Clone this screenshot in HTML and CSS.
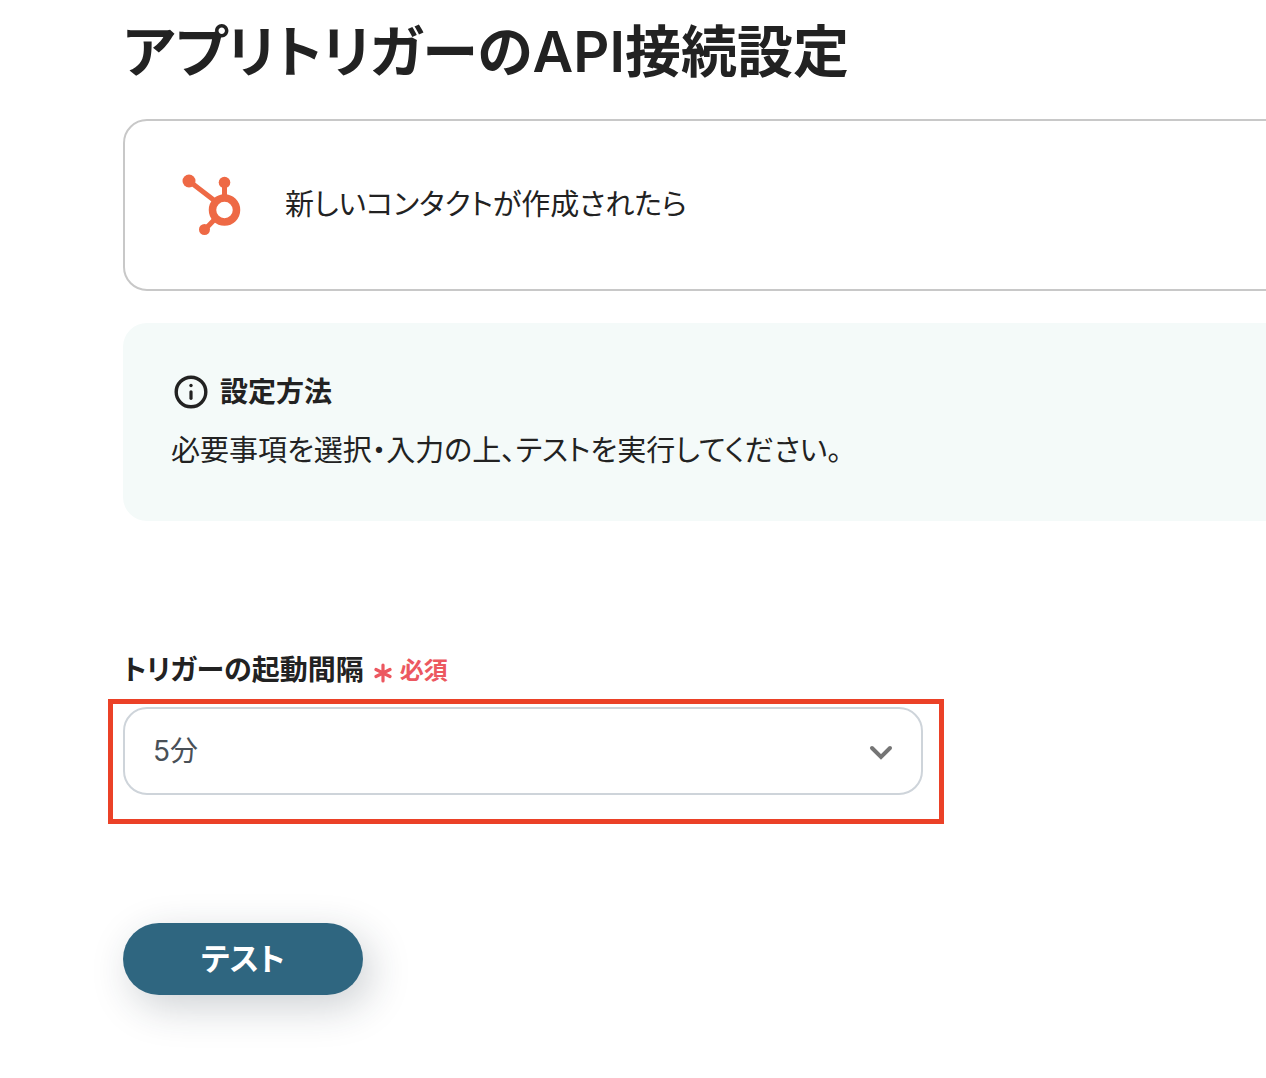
FILE: index.html
```html
<!DOCTYPE html>
<html lang="ja">
<head>
<meta charset="utf-8">
<title>アプリトリガーのAPI接続設定</title>
<link rel="stylesheet" href="styles.css">
</head>
<body>
<main class="page">
  <h1 class="title">アプリトリガーのAPI接続設定</h1>
  <section class="trigger">
    <svg class="trigger-logo" viewBox="0 0 60 62" aria-hidden="true">
      <g fill="none" stroke="#ee6945">
        <path d="M7 7 33 27M42.500 9V24M22.500 56 33 45" stroke-width="5"/>
        <circle cx="42.500" cy="36" r="12" stroke-width="7.5"/>
      </g>
      <g fill="#ee6945"><circle cx="7" cy="7" r="6.500"/><circle cx="42.500" cy="8.500" r="5.800"/><circle cx="22.500" cy="55.500" r="5.500"/></g>
    </svg>
    <p class="trigger-name">新しいコンタクトが作成されたら</p>
  </section>
  <section class="guide">
    <h2 class="guide-title">
      <svg class="guide-icon" viewBox="0 0 34 34" aria-hidden="true">
        <circle cx="17" cy="17" r="14.800" fill="none" stroke="#222" stroke-width="3.400"/>
        <path d="M17 16.800V23.300" stroke="#222" stroke-width="3.200" stroke-linecap="round"/>
        <circle cx="17" cy="10.500" r="1.700" fill="#222"/>
      </svg>
      設定方法
    </h2>
    <p class="guide-text">必要事項を選択・入力の上、テストを実行してください。</p>
  </section>
  <form class="form">
    <div class="field-head">
      <label class="field-label" for="interval">トリガーの起動間隔</label>
      <span class="required">
        <svg class="required-mark" viewBox="0 0 18 20" aria-hidden="true"><path d="M9 2V18M2 6.500 16 13.500M16 6.500 2 13.500" stroke="#ec5860" stroke-width="3.200" stroke-linecap="round"/></svg>
        必須
      </span>
    </div>
    <div class="highlight">
      <div class="select-box">
        <select class="select" id="interval"><option>5分</option></select>
        <svg class="chevron" viewBox="0 0 24 16" aria-hidden="true"><path d="M3 3 12 12 21 3" fill="none" stroke="#757575" stroke-width="4" stroke-linecap="round"/></svg>
      </div>
    </div>
    <button class="test-button" type="button">テスト</button>
  </form>
</main>
</body>
</html>
```
FILE: styles.css
```css
* { box-sizing: border-box; }
body {
  margin: 0;
  overflow-x: hidden;
  background: #fff;
  color: #222;
  font-family: Inter, "Noto Sans CJK JP", sans-serif;
  font-feature-settings: "palt";
}
h1, h2, p { margin: 0; }
.page { padding: 12px 0 80px 123px; }
.title { font-size: 56px; line-height: 80px; font-weight: 600; }
.trigger {
  display: flex;
  align-items: center;
  gap: 43px;
  margin: 27px -32px 0 0;
  padding: 52px 57px;
  border: 2px solid #c8c8c8;
  border-radius: 24px;
}
.trigger-logo { width: 60px; height: 64px; }
.trigger-name { font-size: 29px; line-height: 40px; }
.guide {
  margin: 32px -32px 0 0;
  padding: 48px;
  border-radius: 24px;
  background: #f4faf9;
}
.guide-title {
  display: flex;
  align-items: center;
  gap: 12px;
  padding-left: 3px;
  font-size: 28px;
  line-height: 42px;
  font-weight: 600;
}
.guide-icon { width: 34px; height: 34px; }
.guide-text { margin-top: 16px; font-size: 29px; line-height: 44px; }
.form { margin-top: 128px; }
.field-head { display: flex; align-items: center; gap: 10px; }
.field-label { font-size: 28px; line-height: 42px; font-weight: 600; }
.required {
  display: flex;
  align-items: center;
  gap: 8px;
  padding-top: 2px;
  color: #ec5860;
  font-size: 24px;
  line-height: 36px;
  font-weight: 600;
}
.required-mark { width: 18px; height: 20px; margin-top: 4px; }
.highlight {
  width: 836px;
  max-width: 100%;
  margin: 8px 0 0 -15px;
  padding: 3px 16px 24px 10px;
  border: 5px solid #eb4127;
}
.select-box { position: relative; }
.select {
  display: block;
  width: 100%;
  height: 88px;
  padding: 0 28px;
  border: 2px solid #ced4da;
  border-radius: 24px;
  background: #fff;
  color: #495057;
  font: 28px Inter, "Noto Sans CJK JP", sans-serif;
  appearance: none;
}
.chevron {
  position: absolute;
  right: 30px;
  top: 38px;
  width: 24px;
  height: 16px;
  pointer-events: none;
}
.test-button {
  display: block;
  width: 240px;
  height: 72px;
  margin-top: 99px;
  padding: 0 0 6px;
  border: 0;
  border-radius: 36px;
  background: #2f6680;
  color: #fff;
  font: 600 31px Inter, "Noto Sans CJK JP", sans-serif;
  font-feature-settings: "palt";
  box-shadow: 8px 12px 40px rgba(30, 45, 60, .22);
}
```
